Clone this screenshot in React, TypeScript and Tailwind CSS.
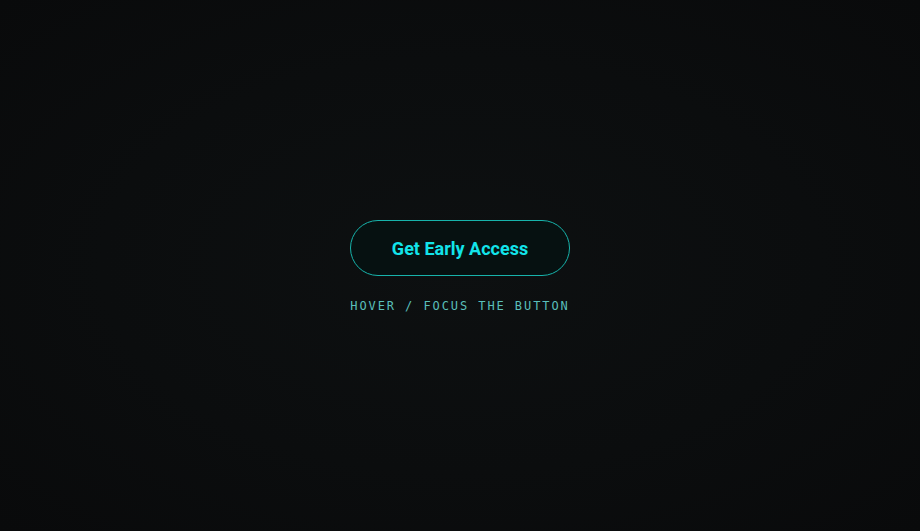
import React from 'react';

export default function App() {
  return (
    <div className="min-h-screen w-full flex flex-col items-center justify-center bg-[radial-gradient(ellipse_at_center,#0d1011_0%,#0b0d0e_55%,#090a0b_100%)]">
      <button
        className="mt-[4px] h-[56px] w-[220px] rounded-full border border-[#17b3ab] bg-[#061111] text-[18px] font-bold text-[#12e4ea] [font-family:Roboto,'Noto_Sans',sans-serif]"
      >
        Get Early Access
      </button>
      <span className="mt-[21px] text-[12px] tracking-[0.16em] text-[#5abfba] [font-family:'DejaVu_Sans_Mono','Liberation_Mono',monospace]">
        HOVER / FOCUS THE BUTTON
      </span>
    </div>
  );
}
